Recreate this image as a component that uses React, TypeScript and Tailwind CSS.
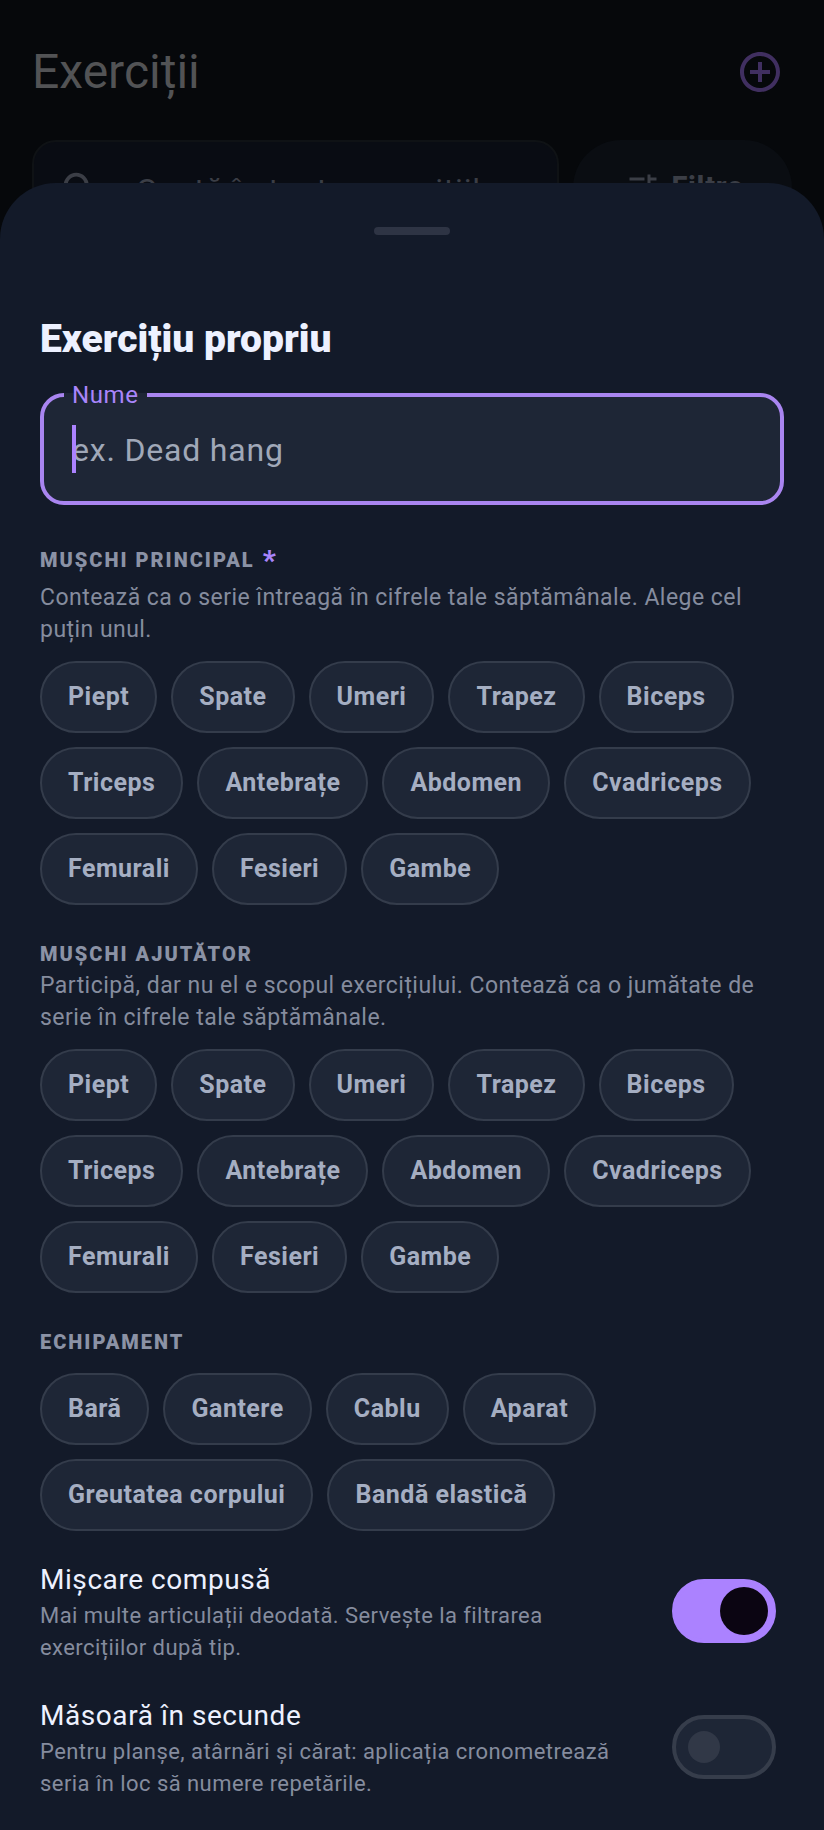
import React, { useState } from 'react';
import { MdAddCircleOutline, MdSearch, MdTune } from 'react-icons/md';

const MUSCLES = [
  'Piept', 'Spate', 'Umeri', 'Trapez', 'Biceps', 'Triceps',
  'Antebrațe', 'Abdomen', 'Cvadriceps', 'Femurali', 'Fesieri', 'Gambe',
];

const EQUIPMENT = ['Bară', 'Gantere', 'Cablu', 'Aparat', 'Greutatea corpului', 'Bandă elastică'];

type ChipGroupProps = {
  title: string;
  hint?: string;
  required?: boolean;
  options: string[];
};

const ChipGroup: React.FC<ChipGroupProps> = ({ title, hint, required, options }) => {
  const [selected, setSelected] = useState<string[]>([]);

  const toggle = (name: string) =>
    setSelected((prev) => (prev.includes(name) ? prev.filter((n) => n !== name) : [...prev, name]));

  return (
    <section>
      <h2
        className={`flex items-center gap-2 text-[20px] font-black uppercase tracking-widest text-[#8b92a5] ${
          required ? 'leading-[43px]' : 'leading-[31px]'
        }`}
      >
        {title}
        {required && <span className="text-[28px] tracking-normal text-[#a985fb]">*</span>}
      </h2>
      {hint && <p className="text-[23px] leading-8 tracking-[0.02em] text-[#858c9e]">{hint}</p>}
      <div className="mt-[15px] flex flex-wrap gap-3.5">
        {options.map((name) => (
          <button
            key={name}
            type="button"
            aria-pressed={selected.includes(name)}
            onClick={() => toggle(name)}
            className="h-[72px] rounded-full border-2 border-[#343c4b] bg-[#1e2636] px-[26px] text-[25px] font-bold tracking-[0.02em] text-[#a5aec2] aria-pressed:border-[#a985fb] aria-pressed:text-[#a985fb]"
          >
            {name}
          </button>
        ))}
      </div>
    </section>
  );
};

type SwitchRowProps = {
  id: string;
  title: string;
  hint: string;
  defaultOn?: boolean;
};

const SwitchRow: React.FC<SwitchRowProps> = ({ id, title, hint, defaultOn }) => (
  <div className="flex items-center gap-8 pr-2">
    <div className="flex-1 pt-0.5">
      <label htmlFor={id} className="block text-[28px] leading-10 tracking-[0.02em] text-[#edf1ff]">
        {title}
      </label>
      <p className="text-[22px] leading-8 tracking-[0.02em] text-[#858c9e]">{hint}</p>
    </div>
    <input
      id={id}
      type="checkbox"
      role="switch"
      defaultChecked={defaultOn}
      className="h-16 w-[104px] shrink-0 appearance-none rounded-full border-4 border-[#363d4b] bg-[#1e2636] before:mt-3 before:ml-3 before:block before:size-8 before:rounded-full before:bg-[#313847] checked:border-[#ab82ff] checked:bg-[#ab82ff] checked:before:mt-1 checked:before:ml-11 checked:before:size-12 checked:before:bg-[#0b0512]"
    />
  </div>
);

const App: React.FC = () => {
  const [name, setName] = useState('');

  return (
    <div className="flex min-h-screen flex-col bg-[#06080b] font-['Roboto',sans-serif]">
      {/* Dimmed screen behind the sheet */}
      <header className="px-8 pt-1">
        <div className="flex h-[136px] items-center justify-between pr-2">
          <h1 className="text-[48px] leading-[56px] text-[#525355]">Exerciții</h1>
          <button type="button" aria-label="Adaugă exercițiu" className="text-[#402f60]">
            <MdAddCircleOutline size={48} />
          </button>
        </div>
        <div className="flex items-start gap-3.5">
          <label className="flex h-[100px] flex-1 items-center gap-8 rounded-3xl border-2 border-[#0f1215] bg-[#090c13] pl-6 text-[#3b3e46]">
            <MdSearch size={46} className="shrink-0" />
            <input
              type="search"
              aria-label="Caută"
              placeholder="Caută în toate exercițiile"
              className="w-full min-w-0 bg-transparent text-[32px] tracking-wide outline-none placeholder:text-[#3b3e46]"
            />
          </label>
          <button
            type="button"
            className="flex h-24 w-[219px] items-center justify-center gap-2.5 rounded-full bg-[#0a0d12] pl-1 text-[29px] font-extrabold tracking-wide text-[#3b3e46]"
          >
            <MdTune size={36} />
            Filtre
          </button>
        </div>
      </header>

      <main className="relative -mt-[57px] flex-1 rounded-t-[56px] bg-[#131a29] px-10 pt-11">
        <div className="mx-auto h-2 w-[76px] rounded-full bg-[#2e3444]" />

        <form onSubmit={(e) => e.preventDefault()}>
          <h1 className="mt-[81px] text-[39px] leading-[46px] font-black text-[#edf1ff]">Exercițiu propriu</h1>

          <fieldset className="relative mt-[19px] mb-[34px] rounded-3xl border-4 border-[#a985f0] bg-[#1e2636] px-5 pb-2.5">
            <legend className="px-2 text-[24px] leading-7 tracking-wide text-[#a985fb]">
              <label htmlFor="exercise-name">Nume</label>
            </legend>
            <input
              id="exercise-name"
              type="text"
              value={name}
              onChange={(e) => setName(e.target.value)}
              placeholder="ex. Dead hang"
              className="block h-[82px] w-full bg-transparent px-2 text-[32px] tracking-wide text-[#edf1ff] caret-[#a985fb] outline-none placeholder:text-[#a0a8b8]"
            />
            {name === '' && <span className="absolute bottom-7 left-7 h-12 w-1 bg-[#ab82ff]" />}
          </fieldset>

          <div className="flex flex-col gap-[34px]">
            <ChipGroup
              title="Mușchi principal"
              required
              hint="Contează ca o serie întreagă în cifrele tale săptămânale. Alege cel puțin unul."
              options={MUSCLES}
            />
            <ChipGroup
              title="Mușchi ajutător"
              hint="Participă, dar nu el e scopul exercițiului. Contează ca o jumătate de serie în cifrele tale săptămânale."
              options={MUSCLES}
            />
            <ChipGroup title="Echipament" options={EQUIPMENT} />
          </div>

          <div className="mt-[27px] flex flex-col gap-[30px]">
            <SwitchRow
              id="compound"
              title="Mișcare compusă"
              hint="Mai multe articulații deodată. Servește la filtrarea exercițiilor după tip."
              defaultOn
            />
            <SwitchRow
              id="timed"
              title="Măsoară în secunde"
              hint="Pentru planșe, atârnări și cărat: aplicația cronometrează seria în loc să numere repetările."
            />
          </div>
        </form>
      </main>
    </div>
  );
};

export default App;
